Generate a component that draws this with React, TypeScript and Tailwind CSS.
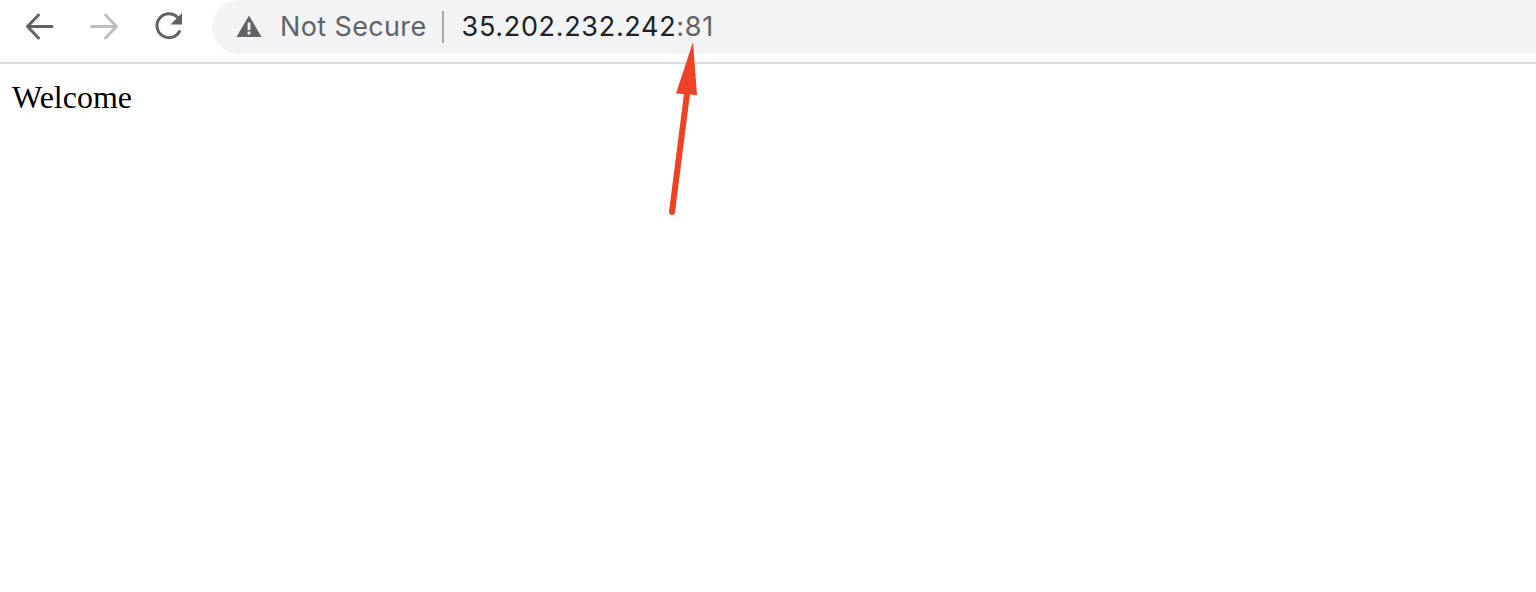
export default function App() {
  return (
    <div className="relative h-[592px] w-[1536px] overflow-hidden bg-white">
      {/* Toolbar */}
      <div className="flex h-[64px] items-start border-b-2 border-[#dcdce0] bg-white">
        <div className="flex h-[54px] w-[212px] shrink-0 items-center pl-[24px]">
          <svg width="32" height="32" viewBox="0 0 32 32" fill="none" stroke="#5f6368" strokeWidth="3" strokeLinecap="round" strokeLinejoin="round">
            <path d="M3.5 15.5H28M14.5 4L3.5 15.5L14.5 27" />
          </svg>
          <svg className="ml-[32px]" width="32" height="32" viewBox="0 0 32 32" fill="none" stroke="#bdbfc2" strokeWidth="3" strokeLinecap="round" strokeLinejoin="round">
            <path d="M3.5 15.5H28M17.5 4L28.5 15.5L17.5 27" />
          </svg>
          <svg className="ml-[34px]" width="32" height="32" viewBox="0 0 32 32" fill="none">
            <path d="M25.5 20.5A12 12 0 1 1 23.5 6.2" stroke="#5f6368" strokeWidth="3" strokeLinecap="round" />
            <path d="M28 2V13.5H16.5Z" fill="#5f6368" />
          </svg>
        </div>
        <div className="flex h-[54px] flex-1 items-center rounded-l-[27px] bg-[#f1f3f4] pl-[24px] font-['Inter',sans-serif] text-[27px]">
          <svg className="mb-[1px]" width="26" height="24" viewBox="0 0 26 24">
            <path d="M13 0.5L25.5 22H0.5Z" fill="#5f6368" />
            <rect x="11.6" y="7.5" width="2.8" height="7.5" fill="#f1f3f4" />
            <rect x="11.6" y="16.5" width="2.8" height="3" fill="#f1f3f4" />
          </svg>
          <span className="ml-[18px] tracking-[0.37px] text-[#5f6368]">Not Secure</span>
          <span className="mb-[1px] ml-[15px] h-[32px] w-[2px] bg-[#a8aaad]" />
          <span className="ml-[18px] tracking-[0.68px] text-[#202124]">
            35.202.232.242<span className="text-[#5f6368]">:81</span>
          </span>
        </div>
      </div>

      {/* Page */}
      <p className="pl-[12px] pt-[13px] font-['Liberation_Serif',serif] text-[32px] leading-[40px] text-black">Welcome</p>

      {/* Annotation arrow */}
      <svg className="absolute left-[660px] top-[36px]" width="50" height="185" viewBox="0 0 50 185" fill="none">
        <path d="M12 176L28 50" stroke="#ef4123" strokeWidth="6" strokeLinecap="round" />
        <path d="M33 6L16 57.5L37 59Z" fill="#ef4123" />
      </svg>
    </div>
  )
}
